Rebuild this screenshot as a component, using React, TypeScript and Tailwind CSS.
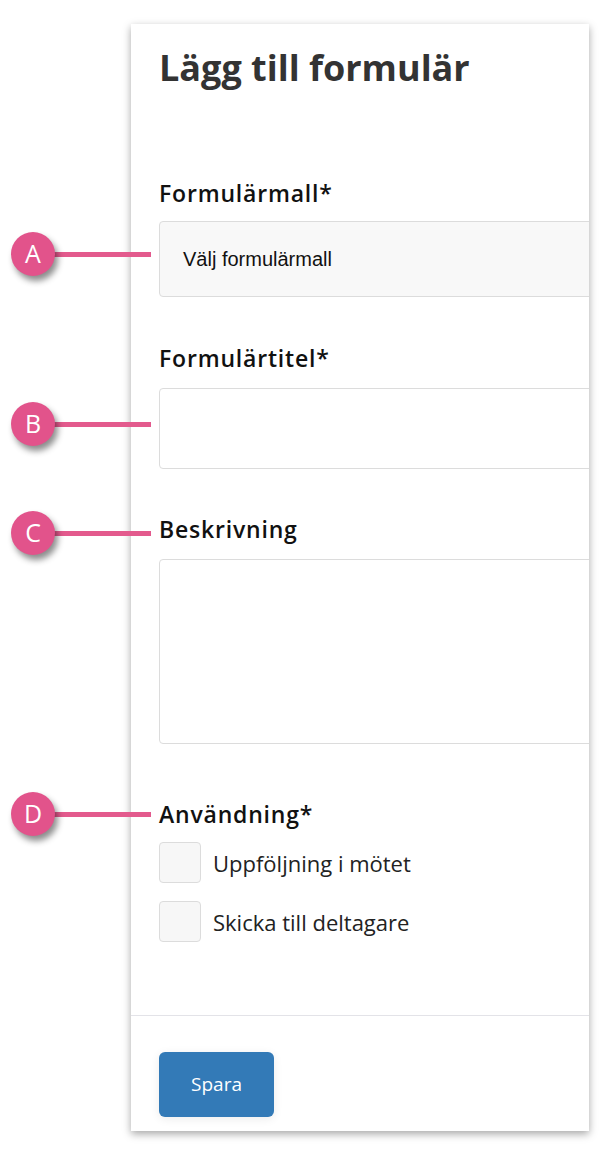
const callouts = [
    { letter: "A", y: 254 },
    { letter: "B", y: 424 },
    { letter: "C", y: 533 },
    { letter: "D", y: 814 },
];

function Callout({ letter, y }: { letter: string; y: number }) {
    return (
        <div className="absolute left-[11px] flex items-center" style={{ top: y - 22 }}>
            <div className="w-[44px] h-[44px] rounded-full bg-[#e2538b] flex items-center justify-center text-white text-[25px] font-medium shadow-[3px_5px_6px_rgba(0,0,0,0.45)] z-10">
                {letter}
            </div>
            <div className="w-[97px] h-[5px] bg-[#e35a8d] -ml-[1px]" />
        </div>
    );
}

function Checkbox({ label }: { label: string }) {
    return (
        <label className="flex items-center gap-[12px]">
            <span className="w-[42px] h-[41px] rounded-[4px] border border-[#dcdcdc] bg-[#f7f7f7]" />
            <span className="text-[22px] text-[#222] leading-[28px]">{label}</span>
        </label>
    );
}

export default function App() {
    return (
        <div className="relative w-[602px] h-[1153px] bg-white pt-[24px] pl-[131px] font-['Open_Sans',sans-serif] overflow-hidden">
            <div className="w-[458px] h-[1107px] bg-white shadow-[0_3px_8px_rgba(0,0,0,0.35)] overflow-hidden flex flex-col">
                <div className="px-[28px] pt-[24px]">
                    <h1 className="text-[36px] leading-[40px] font-bold text-[#333]">Lägg till formulär</h1>

                    {/* Formulärmall */}
                    <div className="mt-[91px] text-[23px] leading-[28px] font-semibold text-[#111] tracking-[0.035em]">Formulärmall*</div>
                    <div className="mt-[14px] w-[460px] h-[76px] rounded-[4px] border border-[#dcdcdc] bg-[#f8f8f8] flex items-center pl-[23px] font-['Liberation_Sans',Arial,sans-serif] text-[20px] text-[#111]">
                        Välj formulärmall
                    </div>

                    {/* Formulärtitel */}
                    <div className="mt-[47px] text-[23px] leading-[28px] font-semibold text-[#111] tracking-[0.035em]">Formulärtitel*</div>
                    <div className="mt-[16px] w-[460px] h-[81px] rounded-[4px] border border-[#dcdcdc] bg-white" />

                    {/* Beskrivning */}
                    <div className="mt-[46px] text-[23px] leading-[28px] font-semibold text-[#111] tracking-[0.035em]">Beskrivning</div>
                    <div className="mt-[16px] w-[460px] h-[185px] rounded-[4px] border border-[#dcdcdc] bg-white" />

                    {/* Användning */}
                    <div className="mt-[56px] text-[23px] leading-[28px] font-semibold text-[#111] tracking-[0.035em]">Användning*</div>
                    <div className="mt-[14px] flex flex-col gap-[18px]">
                        <Checkbox label="Uppföljning i mötet" />
                        <Checkbox label="Skicka till deltagare" />
                    </div>
                </div>

                <div className="mt-[73px] h-px bg-[#e3e3e8]" />

                <div className="px-[28px] pt-[36px]">
                    <button className="w-[115px] h-[65px] rounded-[6px] bg-[#337ab7] text-white text-[19px] shadow-[0_2px_10px_rgba(0,0,0,0.08)]">
                        Spara
                    </button>
                </div>
            </div>

            {callouts.map(c => (
                <Callout key={c.letter} letter={c.letter} y={c.y} />
            ))}
        </div>
    );
}
